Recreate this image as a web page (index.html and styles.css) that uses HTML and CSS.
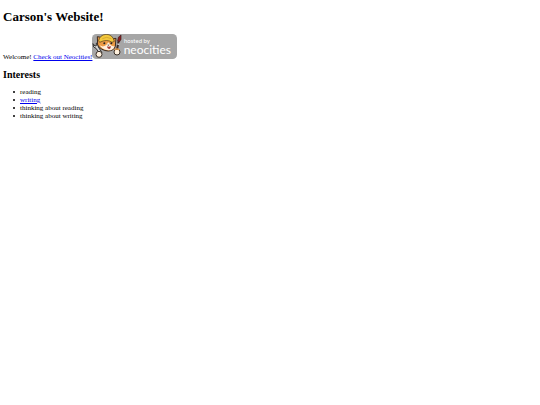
FILE: index.html
```html
<!DOCTYPE html>
<html lang="en">
<head>
  <meta charset="UTF-8" />
  <title>Carson's Website!</title>
  <link rel="stylesheet" href="styles.css">
</head>
<body>
  <h1>Carson's Website!</h1>

  <p>
    Welcome! <a href="https://neocities.org">Check out Neocities!</a><svg class="badge" viewBox="0 0 255 75" role="img" aria-label="hosted by neocities">
      <rect width="255" height="75" rx="13" fill="#a6a6a6" />
      <!-- wrench -->
      <path d="M3 29 L5 39 L12 43 L24 60 L30 56 L19 39 L18 31 L13 27 L13 35 L9 36 Z" fill="#d5d5d5" stroke="#333" stroke-width="3" />
      <!-- brush -->
      <path d="M74 52 L80 20" stroke="#3b2924" stroke-width="6" />
      <path d="M77 21 L79 10 L87 3 L87 16 L83 23 Z" fill="#8c2024" stroke="#40201e" stroke-width="2" />
      <path d="M76 30 L82 31" stroke="#ddd" stroke-width="4" />
      <!-- cat -->
      <path d="M17 33 L16 8 L32 11 Q49 5 61 15 L72 13 L70 36 Q67 50 49 51 Q27 50 17 33 Z" fill="#ed9b45" stroke="#3b2b20" stroke-width="3" />
      <path d="M23 34 Q33 41 43 33 L49 25 L56 33 Q64 40 68 35 Q65 49 49 49 Q31 48 23 34 Z" fill="#fff0df" />
      <path d="M20 20 Q23 3 42 1 Q62 1 67 22 L60 25 Q45 14 23 25 Z" fill="#f3c83d" stroke="#4d3819" stroke-width="2" />
      <path d="M31 14 Q43 6 58 14" fill="none" stroke="#c99a2b" stroke-width="2" />
      <circle cx="37" cy="28" r="3" fill="#222" />
      <circle cx="58" cy="28" r="3" fill="#222" />
      <path d="M45 37 Q51 40 56 36 Q57 45 51 45 Q45 44 45 37 Z" fill="#a53831" />
      <path d="M46 32 L53 32 L49 35 Z" fill="#222" />
      <!-- paws -->
      <circle cx="21" cy="61" r="9" fill="#fff2df" stroke="#3b3028" stroke-width="3" />
      <circle cx="75" cy="54" r="9" fill="#fff2df" stroke="#3b3028" stroke-width="3" />
      <path d="M68 48 Q74 41 82 48" fill="none" stroke="#e5943b" stroke-width="4" />
      <text class="badge-small" x="96" y="27">hosted by</text>
      <text class="badge-name" x="95" y="60">neocities</text>
    </svg>
  </p>

  <h2>Interests</h2>
  <ul>
    <li>reading</li>
    <li><a href="#writing">writing</a></li>
    <li>thinking about reading</li>
    <li>thinking about writing</li>
  </ul>
</body>
</html>
```
FILE: styles.css
```css
body {
  margin: 9px 3px;
  font-family: "Liberation Serif", "Times New Roman", serif;
  font-size: 7px;
  line-height: 8px;
  color: #000;
  background: #fff;
}

h1 {
  margin: 0 0 9px;
  font-size: 13px;
  line-height: 16px;
}

p {
  margin: 0 0 8px;
}

a {
  color: #0000ee;
}

.badge {
  width: 85px;
  height: 25px;
}

.badge-small,
.badge-name {
  font-family: Lato, sans-serif;
  fill: #fff;
}

.badge-small {
  font-size: 18px;
}

.badge-name {
  font-size: 36px;
}

h2 {
  margin: 0 0 7px;
  font-size: 10px;
  line-height: 12px;
}

ul {
  margin: 0;
  padding-left: 10px;
  list-style: none;
}

li {
  display: flex;
  align-items: center;
  gap: 5px;
}

li::before {
  content: "";
  width: 2px;
  height: 2px;
  border-radius: 50%;
  background: #000;
}
```
